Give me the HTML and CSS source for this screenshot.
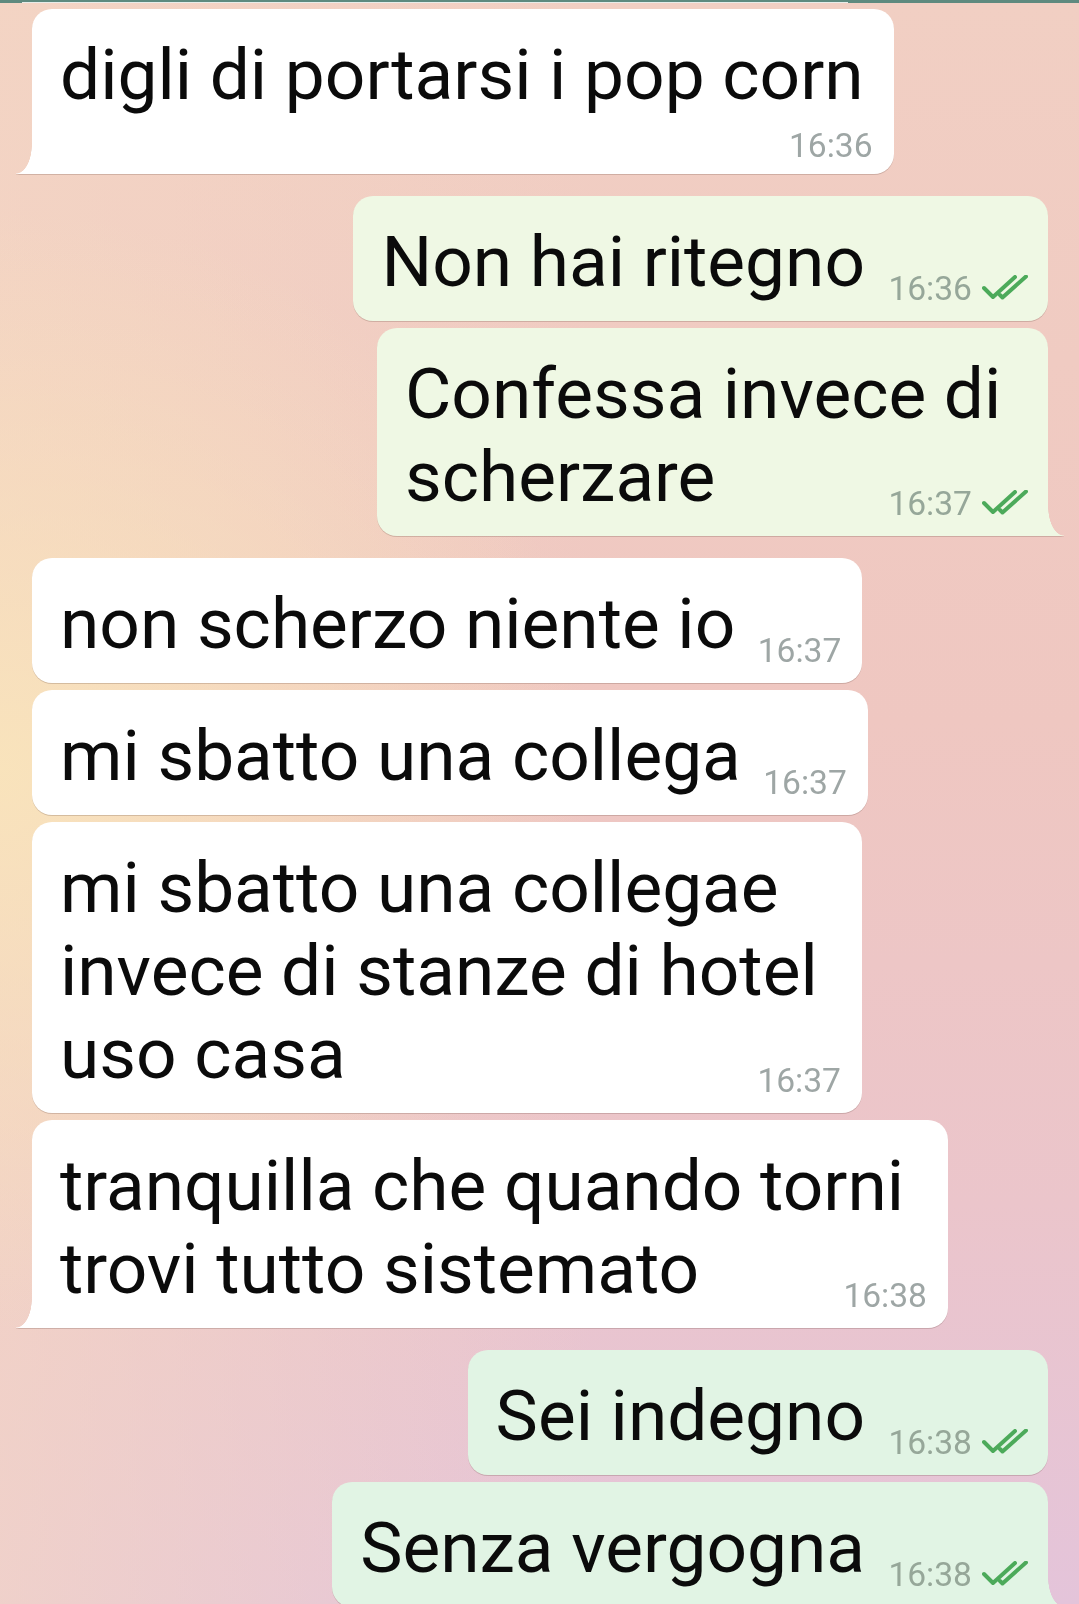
FILE: index.html
```html
<!DOCTYPE html>
<html lang="it">
<head>
<meta charset="utf-8">
<title>Chat</title>
<link rel="stylesheet" href="styles.css">
</head>
<body>
<div class="chat">
  <div class="prev-edge"><div class="prev-line"></div></div>

  <div class="bubble in tail meta-below">
    <div class="text">digli di portarsi i pop corn</div>
    <div class="meta"><span class="time">16:36</span></div>
  </div>

  <div class="bubble out group-start">
    <div class="text">Non hai ritegno<span class="spacer"></span></div>
    <div class="meta"><span class="time">16:36</span><svg class="ticks" viewBox="0 0 46 25" width="46" height="25"><path d="M2 13 L11 22 L33 2" /><path d="M18 20 L20.5 22.5 L44 1.5" /></svg></div>
  </div>

  <div class="bubble out tail w-confessa">
    <div class="text">Confessa invece di<br>scherzare<span class="spacer"></span></div>
    <div class="meta"><span class="time">16:37</span><svg class="ticks" viewBox="0 0 46 25" width="46" height="25"><path d="M2 13 L11 22 L33 2" /><path d="M18 20 L20.5 22.5 L44 1.5" /></svg></div>
  </div>

  <div class="bubble in group-start">
    <div class="text">non scherzo niente io<span class="spacer"></span></div>
    <div class="meta"><span class="time">16:37</span></div>
  </div>

  <div class="bubble in">
    <div class="text">mi sbatto una collega<span class="spacer"></span></div>
    <div class="meta"><span class="time">16:37</span></div>
  </div>

  <div class="bubble in w-collegae">
    <div class="text">mi sbatto una collegae<br>invece di stanze di hotel<br>uso casa<span class="spacer"></span></div>
    <div class="meta"><span class="time">16:37</span></div>
  </div>

  <div class="bubble in tail w-tranquilla">
    <div class="text">tranquilla che quando torni<br>trovi tutto sistemato<span class="spacer"></span></div>
    <div class="meta"><span class="time">16:38</span></div>
  </div>

  <div class="bubble out late group-start">
    <div class="text">Sei indegno<span class="spacer"></span></div>
    <div class="meta"><span class="time">16:38</span><svg class="ticks" viewBox="0 0 46 25" width="46" height="25"><path d="M2 13 L11 22 L33 2" /><path d="M18 20 L20.5 22.5 L44 1.5" /></svg></div>
  </div>

  <div class="bubble out late tail">
    <div class="text">Senza vergogna<span class="spacer"></span></div>
    <div class="meta"><span class="time">16:38</span><svg class="ticks" viewBox="0 0 46 25" width="46" height="25"><path d="M2 13 L11 22 L33 2" /><path d="M18 20 L20.5 22.5 L44 1.5" /></svg></div>
  </div>
</div>
</body>
</html>
```
FILE: styles.css
```css
* { box-sizing: border-box; }

html, body {
  margin: 0;
  padding: 0;
}

body {
  width: 1079px;
  height: 1604px;
  overflow: hidden;
  font-family: Roboto, "Noto Sans", "Liberation Sans", sans-serif;
  color: #0b0b0b;
  background:
    radial-gradient(ellipse 55% 35% at 0% 48%, rgba(249, 228, 187, 0.95), rgba(249, 228, 187, 0) 100%),
    linear-gradient(to right, rgba(244, 214, 196, 0.7), rgba(244, 214, 196, 0) 55%),
    linear-gradient(to bottom, #f1cfc3 0%, #efc7c1 45%, #ebc5cb 75%, #e4c4da 100%);
}

.chat {
  display: flex;
  flex-direction: column;
  padding: 0 31px 0 32px;
}

.prev-edge {
  height: 3px;
  margin: 0 -31px 0 -32px;
  background: #5e8a7f;
}

.prev-line {
  height: 1px;
  margin: 2px 0 0 22px;
  width: 826px;
  background: #e7ece9;
}

.bubble {
  position: relative;
  padding: 24px 20px 16px 28px;
  border-radius: 20px;
  margin-top: 7px;
  filter: drop-shadow(0 1px 0.6px rgba(90, 60, 50, 0.22));
}

.bubble.group-start { margin-top: 22px; }

.bubble.in {
  align-self: flex-start;
  background: #ffffff;
  --bubble: #ffffff;
  padding-right: 21px;
}

.bubble.out {
  align-self: flex-end;
  background: #eff8e4;
  --bubble: #eff8e4;
}

.bubble.out.late {
  background: #e1f4e4;
  --bubble: #e1f4e4;
}

.bubble.in.meta-below {
  margin-top: 6px;
  padding-right: 30px;
  padding-bottom: 12px;
}

.text {
  font-size: 71.2px;
  line-height: 83px;
  white-space: nowrap;
}

.spacer {
  display: inline-block;
  height: 1px;
  width: 106px;
}

.bubble.out .spacer { width: 163px; }

.meta {
  display: flex;
  justify-content: flex-end;
  align-items: baseline;
  gap: 10px;
  height: 32px;
  margin-top: -30px;
  font-size: 33.6px;
  line-height: 32px;
}

.bubble.meta-below .meta {
  margin-top: 14px;
  margin-right: -9px;
}

.time { color: #9ea6a5; }
.bubble.out .time { color: #96a799; }

.ticks {
  display: block;
  fill: none;
  stroke: #4caa5a;
  stroke-width: 4;
  stroke-linecap: round;
  stroke-linejoin: round;
}

/* tails */
.bubble.in.tail { border-bottom-left-radius: 0; }
.bubble.out.tail { border-bottom-right-radius: 0; }

.bubble.tail::after {
  content: "";
  position: absolute;
  bottom: 0;
  width: 16px;
  height: 29px;
}

.bubble.in.tail::after {
  left: -16px;
  background: radial-gradient(ellipse 16px 29px at 0 0, transparent 97%, var(--bubble) 100%);
}

.bubble.out.tail::after {
  right: -16px;
  background: radial-gradient(ellipse 16px 29px at 100% 0, transparent 97%, var(--bubble) 100%);
}

/* widths of wrapped messages */
.w-confessa { width: 671px; }
.w-collegae { width: 830px; }
.w-tranquilla { width: 916px; }
```
